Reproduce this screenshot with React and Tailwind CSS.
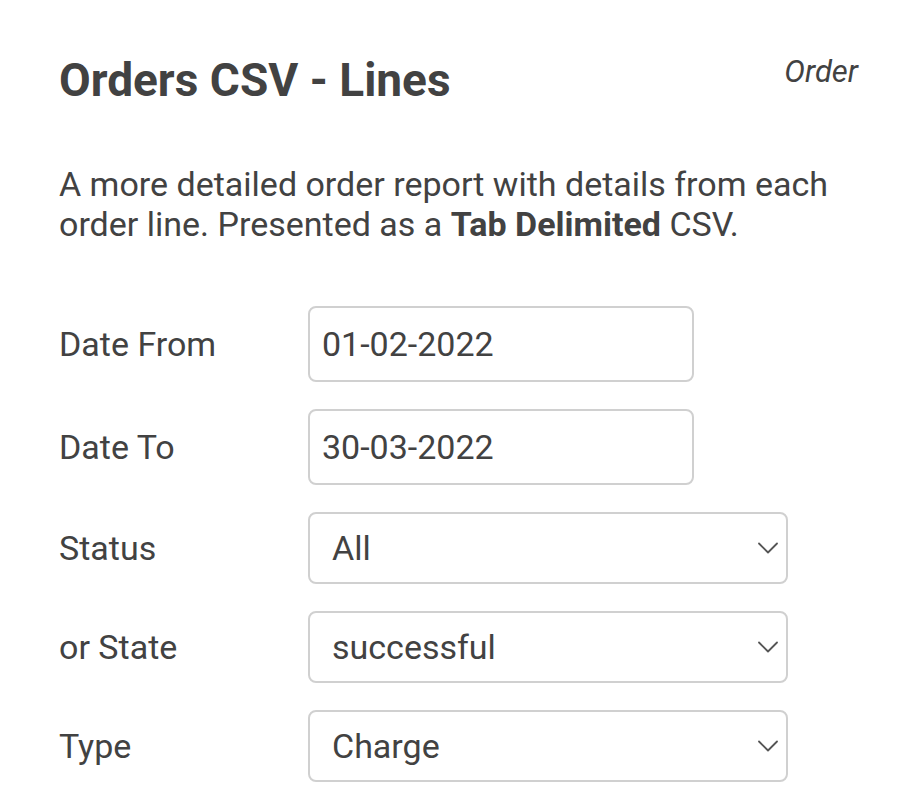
import { ChevronDown } from "lucide-react";

const fields = [
  { label: "Date From", type: "input", value: "01-02-2022" },
  { label: "Date To", type: "input", value: "30-03-2022" },
  { label: "Status", type: "select", value: "All" },
  { label: "or State", type: "select", value: "successful" },
  { label: "Type", type: "select", value: "Charge" },
];

const App = () => {
  return (
    <div
      className="min-h-[808px] bg-white pl-[59px] pr-[40px] pt-[50px] text-[#424242]"
      style={{ fontFamily: "Roboto, 'Noto Sans', sans-serif" }}
    >
      {/* header */}
      <div className="flex items-start justify-between">
        <h2 className="text-[46px] font-bold leading-[60px]">Orders CSV - Lines</h2>
        <p className="pt-[4px] text-[31px] italic leading-[36px]">Order</p>
      </div>

      <p className="mt-[54px] w-[800px] text-[34px] leading-[40px]">
        A more detailed order report with details from each order line.
        Presented as a <span className="font-bold">Tab Delimited</span> CSV.
      </p>

      {/* form */}
      <div className="mt-[62px] flex flex-col gap-[27px]">
        {fields.map((f) => (
          <div key={f.label} className="flex items-center">
            <label className="w-[249px] text-[34px] leading-[40px]">{f.label}</label>
            {f.type === "input" ? (
              <div className="flex h-[76px] w-[386px] items-center rounded-[8px] border-2 border-[#d0d0d0] px-[12px] text-[34px]">
                {f.value}
              </div>
            ) : (
              <div className="flex h-[72px] w-[480px] items-center justify-between rounded-[8px] border-2 border-[#d0d0d0] pl-[22px] pr-0 text-[34px]">
                <span>{f.value}</span>
                <ChevronDown size={36} strokeWidth={1.2} className="text-[#555]" />
              </div>
            )}
          </div>
        ))}
      </div>
    </div>
  );
};

export default App;
